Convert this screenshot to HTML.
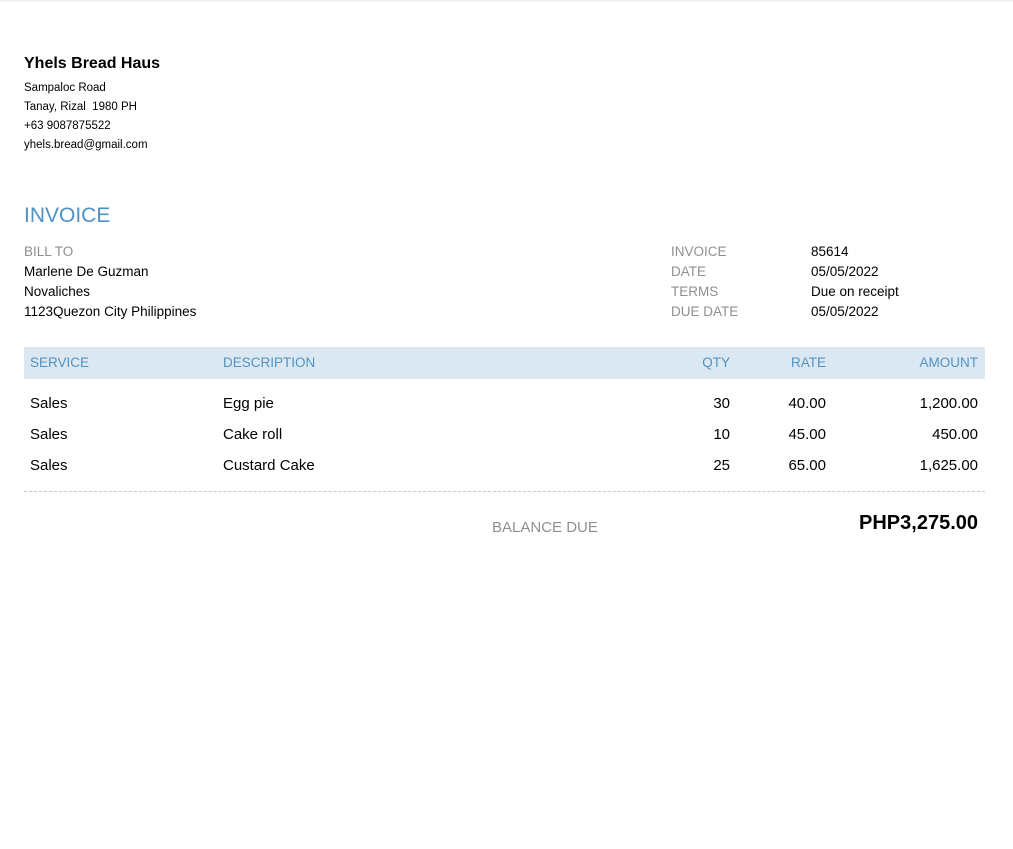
<!DOCTYPE html>
<html><head><meta charset="utf-8"><style>
body{margin:0;width:1013px;height:849px;background:#fff;font-family:"Liberation Sans",Arial,sans-serif;position:relative;overflow:hidden;color:#000}
.a{position:absolute;white-space:nowrap}
.topbar{position:absolute;left:0;top:0;width:1013px;height:2px;background:#f3f3f3}
.s{font-size:11.5px;line-height:19px}
.g{color:#8f8f8f}
.b{color:#4f92c4}
.m{font-size:13.5px;line-height:20px}
.r{text-align:right}
</style></head><body>
<div class="topbar"></div>
<div class="a" style="left:24px;top:54px;font-size:16px;font-weight:bold;line-height:20px">Yhels Bread Haus</div>
<div class="a s" style="left:24px;top:79px">Sampaloc Road<br>Tanay, Rizal&nbsp; 1980 PH<br>+63 9087875522<br>yhels.bread@gmail.com</div>
<div class="a b" style="left:24px;top:203px;font-size:21px;line-height:26px">INVOICE</div>
<div class="a m" style="left:24px;top:242px"><span class="g">BILL TO</span><br>Marlene De Guzman<br>Novaliches<br>1123Quezon City Philippines</div>
<div class="a m g" style="left:671px;top:242px">INVOICE<br>DATE<br>TERMS<br>DUE DATE</div>
<div class="a m" style="left:811px;top:242px">85614<br>05/05/2022<br>Due on receipt<br>05/05/2022</div>
<div class="a" style="left:24px;top:347px;width:961px;height:32px;background:#dce8f1"></div>
<div class="a b m" style="left:30px;top:353px">SERVICE</div>
<div class="a b m" style="left:223px;top:353px">DESCRIPTION</div>
<div class="a b m r" style="left:630px;width:100px;top:353px">QTY</div>
<div class="a b m r" style="left:726px;width:100px;top:353px">RATE</div>
<div class="a b m r" style="left:828px;width:150px;top:353px">AMOUNT</div>
<div class="a" style="left:30px;top:388px;font-size:15px;line-height:31px">Sales<br>Sales<br>Sales</div>
<div class="a" style="left:223px;top:388px;font-size:15px;line-height:31px">Egg pie<br>Cake roll<br>Custard Cake</div>
<div class="a r" style="left:630px;width:100px;top:388px;font-size:15px;line-height:31px">30<br>10<br>25</div>
<div class="a r" style="left:726px;width:100px;top:388px;font-size:15px;line-height:31px">40.00<br>45.00<br>65.00</div>
<div class="a r" style="left:828px;width:150px;top:388px;font-size:15px;line-height:31px">1,200.00<br>450.00<br>1,625.00</div>
<div class="a" style="left:24px;top:491px;width:961px;border-top:1px dashed #c8c8c8"></div>
<div class="a g" style="left:492px;top:518px;font-size:15px;line-height:20px">BALANCE DUE</div>
<div class="a r" style="left:778px;width:200px;top:511px;font-size:20px;font-weight:bold;line-height:24px">PHP3,275.00</div>
</body></html>
